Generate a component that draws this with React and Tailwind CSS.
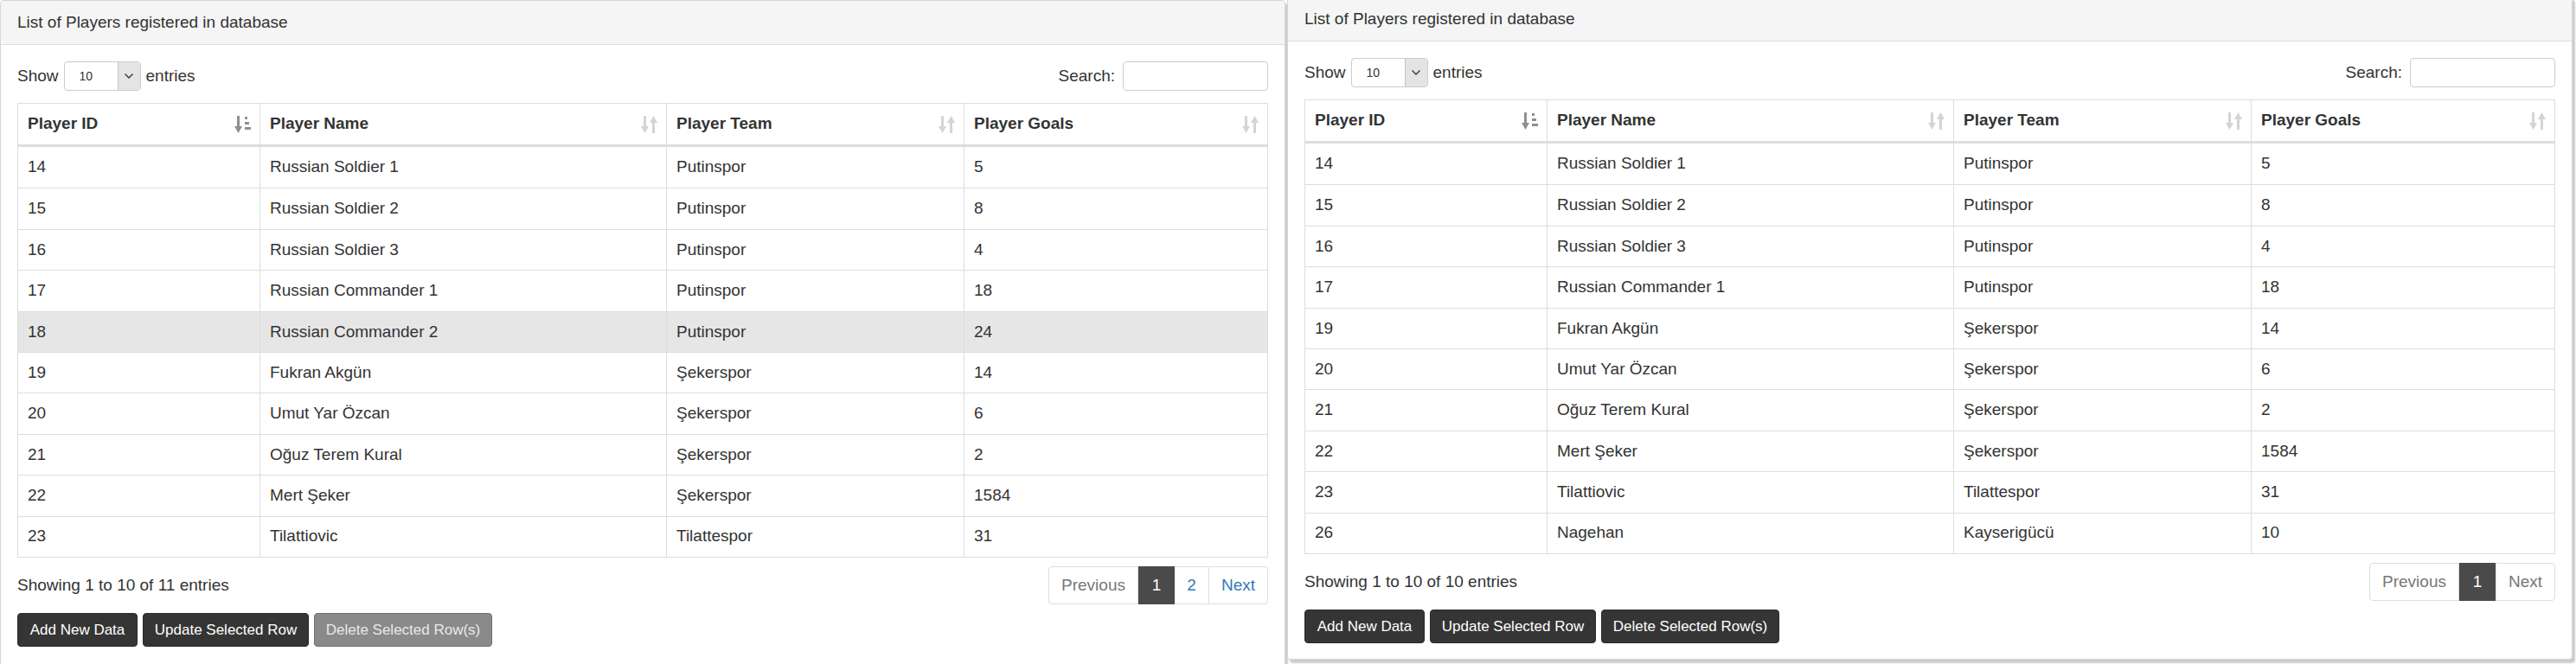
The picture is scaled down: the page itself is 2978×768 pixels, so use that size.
import React from 'react';
import { ChevronDown } from 'lucide-react';

const leftRows = [
  [14, 'Russian Soldier 1', 'Putinspor', 5],
  [15, 'Russian Soldier 2', 'Putinspor', 8],
  [16, 'Russian Soldier 3', 'Putinspor', 4],
  [17, 'Russian Commander 1', 'Putinspor', 18],
  [18, 'Russian Commander 2', 'Putinspor', 24],
  [19, 'Fukran Akgün', 'Şekerspor', 14],
  [20, 'Umut Yar Özcan', 'Şekerspor', 6],
  [21, 'Oğuz Terem Kural', 'Şekerspor', 2],
  [22, 'Mert Şeker', 'Şekerspor', 1584],
  [23, 'Tilattiovic', 'Tilattespor', 31],
];

const rightRows = [
  [14, 'Russian Soldier 1', 'Putinspor', 5],
  [15, 'Russian Soldier 2', 'Putinspor', 8],
  [16, 'Russian Soldier 3', 'Putinspor', 4],
  [17, 'Russian Commander 1', 'Putinspor', 18],
  [19, 'Fukran Akgün', 'Şekerspor', 14],
  [20, 'Umut Yar Özcan', 'Şekerspor', 6],
  [21, 'Oğuz Terem Kural', 'Şekerspor', 2],
  [22, 'Mert Şeker', 'Şekerspor', 1584],
  [23, 'Tilattiovic', 'Tilattespor', 31],
  [26, 'Nagehan', 'Kayserigücü', 10],
];

const SortBoth = () => (
  <svg width="20" height="22" viewBox="0 0 20 22" className="shrink-0">
    <g fill="#d4d4d4">
      <rect x="3" y="1" width="3" height="14" />
      <polygon points="0,13 9,13 4.5,21" />
      <rect x="13" y="7" width="3" height="14" />
      <polygon points="10,9 19,9 14.5,1" />
    </g>
  </svg>
);

const SortAsc = () => (
  <svg width="20" height="22" viewBox="0 0 20 22" className="shrink-0">
    <g fill="#8f8f8f">
      <rect x="3" y="1" width="3" height="14" />
      <polygon points="0,13 9,13 4.5,21" />
      <rect x="12" y="2" width="3" height="3" />
      <rect x="12" y="8" width="5" height="3" />
      <rect x="12" y="14" width="7" height="3" />
    </g>
  </svg>
);

const cols = 'grid grid-cols-[279px_470px_344px_351px]';

const DataTable = ({ rows, highlight }) => (
  <div className="border border-[#ddd]">
    <div className={`${cols} h-[50px] border-b-[3px] border-[#ddd] font-bold`}>
      {['Player ID', 'Player Name', 'Player Team', 'Player Goals'].map((label, i) => (
        <div
          key={label}
          className={`flex items-center justify-between pl-[11px] pr-[9px] ${i > 0 ? 'border-l border-[#ddd]' : ''}`}
        >
          <span>{label}</span>
          {i === 0 ? <SortAsc /> : <SortBoth />}
        </div>
      ))}
    </div>
    {rows.map((row, r) => (
      <div
        key={row[0]}
        className={`${cols} h-[47.4px] ${r > 0 ? 'border-t border-[#ddd]' : ''} ${row[0] === highlight ? 'bg-[#e6e6e6]' : ''}`}
      >
        {row.map((cell, i) => (
          <div key={i} className={`flex items-center pl-[11px] ${i > 0 ? 'border-l border-[#ddd]' : ''}`}>
            {cell}
          </div>
        ))}
      </div>
    ))}
  </div>
);

const Pagination = ({ pages, nextEnabled }) => (
  <div className="flex h-[44px]">
    <div className="flex items-center justify-center w-[104px] border border-[#ddd] rounded-l-[4px] text-[#777]">
      Previous
    </div>
    {pages.map((p, i) =>
      i === 0 ? (
        <div key={p} className="flex items-center justify-center w-[42px] bg-[#4a4a4a] text-white">
          {p}
        </div>
      ) : (
        <div key={p} className="flex items-center justify-center w-[39px] border-y border-[#ddd] text-[#337ab7]">
          {p}
        </div>
      )
    )}
    <div
      className={`flex items-center justify-center w-[69px] border border-[#ddd] rounded-r-[4px] ${nextEnabled ? 'text-[#337ab7]' : 'text-[#777]'}`}
    >
      Next
    </div>
  </div>
);

const Panel = ({ rows, highlight, total, pages, nextEnabled, deleteDisabled, className = '', bodyPad = 'pb-[18px]' }) => (
  <div className={`w-[1486px] shrink-0 bg-white border border-[#d6d6d6] rounded-[4px] shadow-[3px_4px_2px_rgba(0,0,0,0.2)] ${className}`}>
    {/* Heading */}
    <div className="h-[51px] flex items-center px-[19px] bg-[#f5f5f5] border-b border-[#ddd] rounded-t-[4px]">
      List of Players registered in database
    </div>

    <div className={`pt-[19px] px-[19px] ${bodyPad}`}>
      {/* Length + search */}
      <div className="flex items-center justify-between h-[34px]">
        <div className="flex items-center gap-[6px]">
          <span>Show</span>
          <div className="flex h-[34px] w-[89px] border border-[#ccc] rounded-[4px] overflow-hidden bg-white">
            <span className="flex-1 flex items-center pl-[17px] text-[14px]">10</span>
            <span className="w-[26px] flex items-center justify-center bg-[#e4e4e4] border-l border-[#c4c4c4]">
              <ChevronDown size={16} strokeWidth={2.5} className="text-[#444]" />
            </span>
          </div>
          <span>entries</span>
        </div>
        <div className="flex items-center gap-[9px]">
          <span>Search:</span>
          <div className="w-[168px] h-[34px] border border-[#ccc] rounded-[4px]" />
        </div>
      </div>

      <div className="mt-[14px]">
        <DataTable rows={rows} highlight={highlight} />
      </div>

      {/* Info + paging */}
      <div className="mt-[10px] flex items-center justify-between">
        <span>Showing 1 to 10 of {total} entries</span>
        <Pagination pages={pages} nextEnabled={nextEnabled} />
      </div>

      {/* Actions */}
      <div className="mt-[10px] flex gap-[6px] text-[17px] text-white">
        <button className="w-[139px] h-[39px] rounded-[4px] bg-[#353535] border border-[#2a2a2a]">Add New Data</button>
        <button className="w-[192px] h-[39px] rounded-[4px] bg-[#353535] border border-[#2a2a2a]">Update Selected Row</button>
        <button
          className={`w-[206px] h-[39px] rounded-[4px] border ${deleteDisabled ? 'bg-[#8a8a8a] border-[#6e6e6e] text-[#e8e8e8]' : 'bg-[#353535] border-[#2a2a2a]'}`}
        >
          Delete Selected Row(s)
        </button>
      </div>
    </div>
  </div>
);

export default function App() {
  return (
    <div className="w-[2978px] h-[768px] overflow-hidden bg-white flex items-start font-['Liberation_Sans',Arial,sans-serif] text-[19px] text-[#333]">
      <Panel rows={leftRows} highlight={18} total={11} pages={[1, 2]} nextEnabled deleteDisabled bodyPad="pb-[40px]" />
      <Panel rows={rightRows} total={10} pages={[1]} className="ml-[2px] -mt-[4px]" />
    </div>
  );
}
